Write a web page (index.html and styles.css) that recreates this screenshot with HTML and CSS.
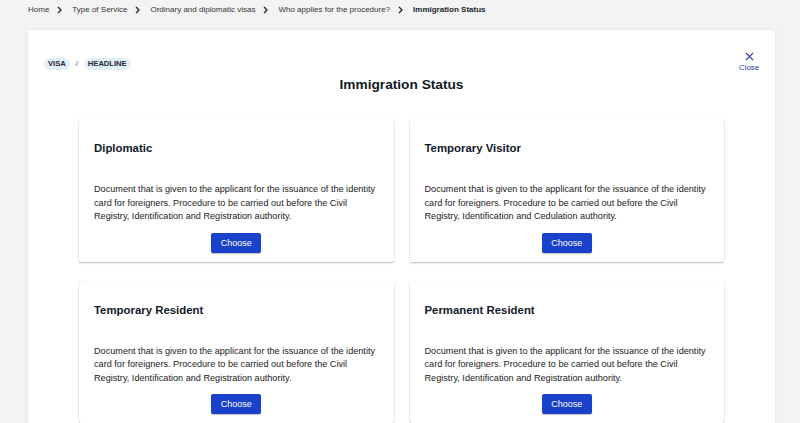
FILE: index.html
```html
<!DOCTYPE html>
<html lang="en">
<head>
<meta charset="utf-8">
<title>Immigration Status</title>
<link rel="stylesheet" href="styles.css">
</head>
<body>
<nav class="breadcrumb">
  <span class="crumb">Home</span>
  <svg class="chev" viewBox="0 0 5 8" width="5" height="8"><path d="M1 1 L4 4 L1 7" fill="none" stroke="#222" stroke-width="1.3"/></svg>
  <span class="crumb">Type of Service</span>
  <svg class="chev" viewBox="0 0 5 8" width="5" height="8"><path d="M1 1 L4 4 L1 7" fill="none" stroke="#222" stroke-width="1.3"/></svg>
  <span class="crumb">Ordinary and diplomatic visas</span>
  <svg class="chev" viewBox="0 0 5 8" width="5" height="8"><path d="M1 1 L4 4 L1 7" fill="none" stroke="#222" stroke-width="1.3"/></svg>
  <span class="crumb">Who applies for the procedure?</span>
  <svg class="chev" viewBox="0 0 5 8" width="5" height="8"><path d="M1 1 L4 4 L1 7" fill="none" stroke="#222" stroke-width="1.3"/></svg>
  <span class="crumb current">Immigration Status</span>
</nav>

<main class="panel">
  <div class="tags">
    <span class="chip">VISA</span>
    <span class="sep">/</span>
    <span class="chip">HEADLINE</span>
  </div>
  <button class="close">
    <svg viewBox="0 0 10 10" width="9" height="9"><path d="M1 1 L9 9 M9 1 L1 9" stroke="#2b3aa6" stroke-width="1.4" fill="none"/></svg>
    <span>Close</span>
  </button>
  <h1 class="title">Immigration Status</h1>

  <div class="grid">
    <section class="card">
      <h2>Diplomatic</h2>
      <p>Document that is given to the applicant for the issuance of the identity card for foreigners. Procedure to be carried out before the Civil Registry, Identification and Registration authority.</p>
      <button class="choose">Choose</button>
    </section>
    <section class="card">
      <h2>Temporary Visitor</h2>
      <p>Document that is given to the applicant for the issuance of the identity card for foreigners. Procedure to be carried out before the Civil Registry, Identification and Cedulation authority.</p>
      <button class="choose">Choose</button>
    </section>
    <section class="card">
      <h2>Temporary Resident</h2>
      <p>Document that is given to the applicant for the issuance of the identity card for foreigners. Procedure to be carried out before the Civil Registry, Identification and Registration authority.</p>
      <button class="choose">Choose</button>
    </section>
    <section class="card">
      <h2>Permanent Resident</h2>
      <p>Document that is given to the applicant for the issuance of the identity card for foreigners. Procedure to be carried out before the Civil Registry, Identification and Registration authority.</p>
      <button class="choose">Choose</button>
    </section>
  </div>
</main>
</body>
</html>
```
FILE: styles.css
```css
* { box-sizing: border-box; }
html, body { margin: 0; padding: 0; }
body {
  background: #f3f3f3;
  font-family: "Liberation Sans", Arial, sans-serif;
  color: #222;
  overflow: hidden;
  height: 423px;
}
.breadcrumb {
  display: flex;
  align-items: center;
  height: 19px;
  padding-left: 28px;
  font-size: 8px;
  color: #333;
}
.chev { margin: 0 10px 0 8px; display: block; }
.crumb.current { font-weight: bold; color: #1b1f2a; }

.panel {
  position: relative;
  margin: 11px 25px 0 28px;
  background: #fff;
  box-shadow: 0 0 2px rgba(0,0,0,0.12);
  padding: 28px 51px 0 51px;
  min-height: 420px;
}
.tags {
  display: flex;
  align-items: center;
  margin-left: -35px;
  height: 11px;
}
.chip {
  background: #e3f0f9;
  border-radius: 6px;
  font-size: 7.6px;
  font-weight: bold;
  color: #1e2533;
  padding: 0 4px;
  height: 12px;
  line-height: 12px;
}
.sep { font-size: 7.5px; color: #444; margin: 0 6px 0 6px; }
.close {
  position: absolute;
  right: 16px;
  top: 22px;
  background: none;
  border: 0;
  padding: 0;
  display: flex;
  flex-direction: column;
  align-items: center;
  font-family: inherit;
  font-size: 7.8px;
  color: #2b3aa6;
  gap: 2px;
}
.close svg { display: block; }
.title {
  margin: 7px 0 0 0;
  text-align: center;
  font-size: 13.7px;
  line-height: 17px;
  font-weight: bold;
  color: #121826;
}
.grid {
  display: grid;
  grid-template-columns: 1fr 1fr;
  column-gap: 16px;
  row-gap: 19px;
  margin-top: 26px;
}
.card {
  background: #fff;
  box-shadow: 0 1px 2px rgba(0,0,0,0.28), 0 0 1px rgba(0,0,0,0.08);
  border-radius: 2px;
  padding: 21px 15px 9px 15px;
  display: flex;
  flex-direction: column;
  align-items: flex-start;
}
.card h2 {
  margin: 0;
  font-size: 11.4px;
  line-height: 16px;
  font-weight: bold;
  color: #111827;
}
.card p {
  margin: 27px 0 0 0;
  font-size: 9.14px;
  line-height: 13.7px;
  color: #222;
}
.choose {
  align-self: center;
  margin-top: 8.5px;
  width: 50px;
  height: 20px;
  background: #1a41c9;
  color: #fff;
  border: 0;
  border-radius: 2px;
  font-family: inherit;
  font-size: 9px;
  padding: 0;
  box-shadow: 0 1px 1px rgba(0,0,0,0.25);
}
```
